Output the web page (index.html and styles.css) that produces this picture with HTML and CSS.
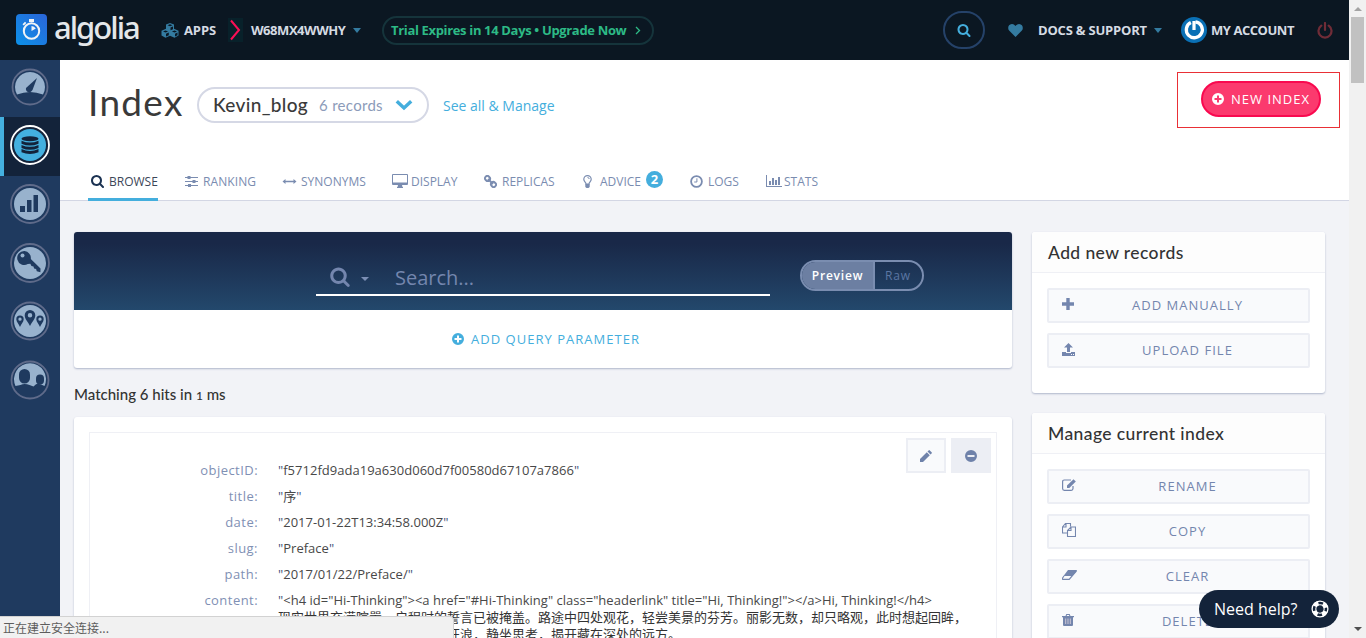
FILE: index.html
```html
<!DOCTYPE html>
<html lang="en">
<head>
<meta charset="utf-8">
<title>Algolia - Index</title>
<link rel="stylesheet" href="styles.css">
</head>
<body>
<svg class="defs" width="0" height="0">
  <symbol id="search" viewBox="0 0 1792 1792"><path fill="currentColor" d="M1216 832q0-185-131.5-316.5t-316.5-131.5-316.5 131.5-131.5 316.5 131.5 316.5 316.500 131.500 316.500-131.500 131.500-316.500zm512 832q0 52-38 90t-90 38q-54 0-90-38l-343-342q-179 124-399 124-143 0-273.500-55.500t-225-150-150-225-55.500-273.500 55.500-273.500 150-225 225-150 273.500-55.500 273.500 55.500 225 150 150 225 55.500 273.500q0 220-124 399l343 343q37 37 37 90z"/></symbol>
  <symbol id="plus-circle" viewBox="0 0 12 12"><path fill="currentColor" fill-rule="evenodd" d="M6 0a6 6 0 1 0 0 12A6 6 0 0 0 6 0zM5 2.500h2V5h2.500v2H7v2.500H5V7H2.500V5H5z"/></symbol>
  <symbol id="pencil" viewBox="0 0 12 12"><path fill="currentColor" d="M0 12V9L6.800 2.200l3 3L3 12zM7.500 1.500L8.600.400q.6-.6 1.200 0l1.800 1.800q.6.600 0 1.200l-1.100 1.100z"/></symbol>
</svg>
<div class="page">
  <header class="topbar">
    <svg class="logo-mark" width="31" height="31" viewBox="0 0 31 31">
      <defs><linearGradient id="lg" x1="1" y1="0" x2="0" y2="1"><stop offset="0" stop-color="#2b65d9"/><stop offset="1" stop-color="#0c91e8"/></linearGradient></defs>
      <rect width="31" height="31" rx="4" fill="url(#lg)"/>
      <circle cx="15.500" cy="17" r="7.700" fill="none" stroke="#f2f4f6" stroke-width="2"/>
      <path d="M13 5h5v3h-5zM6.500 10.300L9 7.800l1.300 1.300-2.500 2.500z" fill="#f2f4f6"/>
      <path d="M15.500 17v-5a5 5 0 0 1 4.300 2.500z" fill="#f2f4f6"/>
    </svg>
    <span class="logo-text">algolia</span>
    <svg class="cubes" width="18" height="15" viewBox="0 0 18 15"><path fill="#347ba0" fill-rule="evenodd" d="M9 0l4 1.600v4.200L17.500 7.800v4.700L13.500 14.800 9 12.800l-4.500 2L.500 12.500V7.800L5 5.800V1.600zM6.500 2.300L9 3.300l2.500-1L9 1.300zM9.500 4.500v2.700l2.500-1V3.400zM2 8.500l2.500 1 2.600-1-2.600-1zM5 10.700v2.700l2.800-1.200V9.500zM10.900 8.500l2.600 1 2.500-1-2.500-1zM14 10.700v2.700l2.500-1.200V9.600z"/></svg>
    <span class="apps">APPS</span>
    <span class="crumb"><svg width="13" height="22" viewBox="0 0 13 22"><path d="M2 1.500l8 9.500-8 9.500" fill="none" stroke="#fb0f56" stroke-width="2"/></svg></span>
    <span class="app-id">W68MX4WWHY</span>
    <i class="caret app-caret"></i>
    <a class="trial"><span>Trial Expires in 14 Days • Upgrade Now</span><svg width="6" height="9" viewBox="0 0 6 9"><path d="M1 1l3.500 3.500L1 8" fill="none" stroke="#2dba86" stroke-width="1.300"/></svg></a>
    <span class="top-search"><svg width="14" height="14"><use href="#search"/></svg></span>
    <svg class="heart" width="15" height="13" viewBox="0 0 15 13"><path fill="#347ba0" d="M7.500 13L1.100 6.600C-.6 4.600 0 .3 3.900 0 6 0 7.500 2 7.500 2S9 0 11.100 0C15 .3 15.600 4.600 13.900 6.600z"/></svg>
    <span class="docs">DOCS &amp; SUPPORT</span>
    <i class="caret docs-caret"></i>
    <svg class="avatar" width="26" height="26" viewBox="0 0 26 26"><circle cx="13" cy="13" r="13" fill="#0a70b5"/><path d="M8.600 6.200A8 8 0 1 0 13 4.700" transform="rotate(10 13 13)" fill="none" stroke="#fff" stroke-width="3.300"/><path d="M13 4v9" stroke="#fff" stroke-width="3.200"/></svg>
    <span class="account">MY ACCOUNT</span>
    <svg class="power" width="16" height="17" viewBox="0 0 16 17"><path d="M4.300 3.700a6.500 6.500 0 1 0 7.400 0M8 1v7" fill="none" stroke="#702c37" stroke-width="2.200" stroke-linecap="round"/></svg>
  </header>

  <div class="body">
    <nav class="sidebar">
      <a class="side first"><svg width="40" height="40" viewBox="0 0 40 40"><circle class="ring" cx="20" cy="20" r="17.500"/><path class="disc" d="M7 27.500A15 15 0 1 1 33 27.500Q20 22.500 7 27.500z"/><path class="ink" d="M27 11l-4.500 12q-2 3-4.500 2t-2-4z"/></svg></a>
      <a class="side active"><svg width="40" height="40" viewBox="0 0 40 40"><circle class="ring" cx="20" cy="20" r="19"/><circle class="disc" cx="20" cy="20" r="16"/><g class="ink"><ellipse cx="20" cy="13.700" rx="8.500" ry="2.500"/><path d="M11.500 15.700q8.500 3.800 17 0v3q-8.500 3.800-17 0zM11.500 19.900q8.500 3.800 17 0v3q-8.500 3.800-17 0zM11.500 24.100q8.500 3.800 17 0v3.200q-8.500 3.200-17 0z"/></g></svg></a>
      <a class="side"><svg width="40" height="40" viewBox="0 0 40 40"><circle class="ring" cx="20" cy="20" r="19"/><circle class="disc" cx="20" cy="20" r="16"/><path class="ink" d="M10 22h5v6h-5zM17 16h4.500v12H17zM23.500 11H28v17h-4.500z"/></svg></a>
      <a class="side"><svg width="40" height="40" viewBox="0 0 40 40"><circle class="ring" cx="20" cy="20" r="19"/><circle class="disc" cx="20" cy="20" r="16"/><path class="ink" d="M14.500 8a7 7 0 1 0 3.300 13l2.500-.3 1.200 2.300 2 .4.600 2 2 .5.700 2.300 3.600 1.100.1-3.700L20.800 16A7 7 0 0 0 14.500 8z"/><circle class="disc" cx="12.500" cy="12.500" r="2"/></svg></a>
      <a class="side"><svg width="40" height="40" viewBox="0 0 40 40"><circle class="ring" cx="20" cy="20" r="18.500"/><circle class="disc" cx="20" cy="20" r="16"/><path class="ink" fill-rule="evenodd" d="M20 9a5.300 5.300 0 0 0-5.300 5.300C14.700 18 18 21 20 25c2-4 5.300-7 5.300-10.700A5.300 5.300 0 0 0 20 9zm0 3a2 2 0 1 1 0 4.500 2 2 0 0 1 0-4.500z"/><path class="ink" fill-rule="evenodd" d="M10 14.500a3.700 3.700 0 0 0-3.700 3.700C6.300 21 9 23 10 26c1-3 3.700-5 3.700-7.800A3.700 3.700 0 0 0 10 14.500zm0 2a1.500 1.500 0 1 1 0 3.300 1.500 1.500 0 0 1 0-3.300zM30 14.500a3.700 3.700 0 0 0-3.700 3.700C26.300 21 29 23 30 26c1-3 3.700-5 3.700-7.800A3.700 3.700 0 0 0 30 14.500zm0 2a1.500 1.500 0 1 1 0 3.300 1.500 1.500 0 0 1 0-3.300z"/></svg></a>
      <a class="side"><svg width="40" height="40" viewBox="0 0 40 40"><circle class="ring" cx="20" cy="20" r="18.500"/><path class="disc" d="M5.500 26A16 16 0 1 1 34.500 26l-4-1.800q-3-1-4.500 0l-2.500 2.300-4-1.500q-5-2-9 0z"/><rect class="ink" x="9" y="9" width="11" height="14.500" rx="5.500"/><rect class="ink" x="26" y="14.500" width="8" height="10" rx="4"/></svg></a>
    </nav>

    <main class="main">
      <section class="head">
        <div class="title-row">
          <h1>Index</h1>
          <a class="picker"><b>Kevin_blog</b><span>6 records</span><svg width="18" height="12" viewBox="0 0 18 12"><path d="M1.800 2.200L9 9l7.200-6.800" fill="none" stroke="#44aedd" stroke-width="3.400"/></svg></a>
          <a class="see-all">See all &amp; Manage</a>
          <div class="highlight"><a class="new-index"><svg width="12" height="12"><use href="#plus-circle"/></svg><span>NEW INDEX</span></a></div>
        </div>
        <nav class="tabs">
          <a class="tab t1 on"><svg width="15" height="14"><use href="#search"/></svg><span>BROWSE</span></a>
          <a class="tab t2"><svg width="13" height="13" viewBox="0 0 13 13"><path fill="currentColor" d="M0 2h13v1H0zM0 6h13v1H0zM0 10h13v1H0zM2.500 1h3v3h-3zM7.500 5h3v3h-3zM3 9h3v3H3z"/></svg><span>RANKING</span></a>
          <a class="tab t3"><svg width="15" height="9" viewBox="0 0 15 9"><path fill="currentColor" d="M.5 4.500L3.500 2v1.700h8V2L14.500 4.500 11.500 7V5.300h-8V7z"/></svg><span>SYNONYMS</span></a>
          <a class="tab t4"><svg width="16" height="14" viewBox="0 0 16 14"><path fill="currentColor" fill-rule="evenodd" d="M1 0h14q1 0 1 1v9q0 1-1 1h-5l.5 2h.5v1H5v-1h.5l.5-2H1q-1 0-1-1V1q0-1 1-1zm0 1v7.500h14V1z"/></svg><span>DISPLAY</span></a>
          <a class="tab t5"><svg width="13" height="13" viewBox="0 0 13 13"><g fill="none" stroke="currentColor" stroke-width="1.900"><rect x="1.200" y="1" width="4.600" height="5" rx="2" transform="rotate(-45 3.500 3.500)"/><rect x="7.200" y="7" width="4.600" height="5" rx="2" transform="rotate(-45 9.500 9.500)"/><path d="M4 4l5 5"/></g></svg><span>REPLICAS</span></a>
          <a class="tab t6"><svg width="9" height="13" viewBox="0 0 9 13"><path d="M3 9C3 7 .8 6.500.8 4.300a3.700 3.700 0 0 1 7.400 0C8.200 6.500 6 7 6 9z" fill="none" stroke="currentColor" stroke-width="1.200"/><path d="M2.300 9h4.400v3L5.500 13h-2l-1.200-1z" fill="currentColor"/><path d="M4.500 2.500q1.700 0 1.700 1.500" fill="none" stroke="currentColor"/></svg><span>ADVICE</span><em>2</em></a>
          <a class="tab t7"><svg width="13" height="13" viewBox="0 0 13 13"><circle cx="6.500" cy="6.500" r="5.400" fill="none" stroke="currentColor" stroke-width="1.800"/><path d="M6.900 3.300v3.700H4.200" fill="none" stroke="currentColor"/></svg><span>LOGS</span></a>
          <a class="tab t8"><svg width="16" height="12" viewBox="0 0 16 12"><path fill="currentColor" d="M0 0h1v11h15v1H0zM3 6h2v4H3zM6 3h2v7H6zM9 5h2v5H9zM12 2h2v8h-2z"/></svg><span>STATS</span></a>
        </nav>
      </section>

      <div class="columns">
        <div class="left">
          <section class="panel query">
            <div class="search-band">
              <div class="field"><svg width="22" height="21"><use href="#search"/></svg><i class="caret"></i><span>Search...</span></div>
              <div class="toggle"><b>Preview</b><span>Raw</span></div>
            </div>
            <a class="add-param"><svg width="12" height="12"><use href="#plus-circle"/></svg><span>ADD QUERY PARAMETER</span></a>
          </section>
          <p class="matching">Matching 6 hits in <small>1</small> ms</p>
          <section class="panel results">
            <div class="record">
              <div class="actions">
                <a><svg width="12" height="12"><use href="#pencil"/></svg></a>
                <a class="dark"><svg width="12" height="12" viewBox="0 0 12 12"><path fill="currentColor" fill-rule="evenodd" d="M6 0a6 6 0 1 0 0 12A6 6 0 0 0 6 0zM2.500 5h7v2h-7z"/></svg></a>
              </div>
              <dl>
                <dt>objectID:</dt><dd><q>"</q>f5712fd9ada19a630d060d7f00580d67107a7866<q>"</q></dd>
                <dt>title:</dt><dd><q>"</q>序<q>"</q></dd>
                <dt>date:</dt><dd><q>"</q>2017-01-22T13:34:58.000Z<q>"</q></dd>
                <dt>slug:</dt><dd><q>"</q>Preface<q>"</q></dd>
                <dt>path:</dt><dd><q>"</q>2017/01/22/Preface/<q>"</q></dd>
                <dt>content:</dt><dd><q>"</q>&lt;h4 id="Hi-Thinking"&gt;&lt;a href="#Hi-Thinking" class="headerlink" title="Hi, Thinking!"&gt;&lt;/a&gt;Hi, Thinking!&lt;/h4&gt;
                  <div class="cjk">现实世界充满喧嚣，启程时的誓言已被掩盖。路途中四处观花，轻尝美景的芬芳。丽影无数，却只略观，此时想起回眸，</div>
                  <div class="cjk second">狂浪，静坐思考，揭开藏在深处的远方。</div></dd>
              </dl>
            </div>
          </section>
        </div>

        <aside class="right">
          <section class="panel side-card add">
            <h2>Add new records</h2>
            <a class="action"><svg width="12" height="12" viewBox="0 0 12 12"><path fill="currentColor" d="M4.300 0h3.400v4.300H12v3.400H7.700V12H4.300V7.700H0V4.300h4.300z"/></svg><span>ADD MANUALLY</span></a>
            <a class="action"><svg width="13" height="13" viewBox="0 0 13 13"><path fill="currentColor" fill-rule="evenodd" d="M6.500 0L11 4.500H8V9H5V4.500H2zM0 9h4v1h5V9h4v4H0zM9 11h1v1H9zM11 11h1v1h-1z"/></svg><span>UPLOAD FILE</span></a>
          </section>
          <section class="panel side-card manage">
            <h2>Manage current index</h2>
            <a class="action"><svg width="14" height="12" viewBox="0 0 14 12"><path d="M11 7v2.500q0 1.800-1.800 1.800H2.300Q.6 11.300.6 9.500V2.800Q.6 1 2.300 1H9" fill="none" stroke="currentColor" stroke-width="1.200"/><path fill="currentColor" d="M5 9V6.600L11.500.2 13.800 2.400 7.300 9z"/></svg><span>RENAME</span></a>
            <a class="action"><svg width="14" height="14" viewBox="0 0 14 14"><path d="M5 10H.5V4l3-3.500h5v3M4 .5V4H.5M13.500 4v9.500h-8v-6L9 4zM9 4v3.500H5.500" fill="none" stroke="currentColor" stroke-width="1.100"/></svg><span>COPY</span></a>
            <a class="action"><svg width="15" height="10" viewBox="0 0 15 10"><path fill="currentColor" d="M6 0h8.500q.7 0 .3 1L10 6H1.500z"/><path d="M2 6L.6 8q-.5 1.400.6 1.400h6L14.300 1" fill="none" stroke="currentColor" stroke-width="1.200"/></svg><span>CLEAR</span></a>
            <a class="action"><svg width="12" height="12" viewBox="0 0 12 12"><path fill="currentColor" d="M0 2h3.500l.8-2h3.400l.8 2H12v1.200h-1V11q0 1-1 1H2q-1 0-1-1V3.200H0zM5 1l-.3 1h2.600L7 1z"/><path d="M3.700 4.500v5.500M6 4.500v5.500M8.300 4.500v5.500" stroke="#d6cdda" stroke-width=".9"/></svg><span>DELETE</span></a>
          </section>
        </aside>
      </div>
    </main>
  </div>

  <div class="scrollbar"><i class="up"></i><i class="thumb"></i><i class="down"></i></div>
  <a class="help"><span>Need help?</span><svg width="18" height="18" viewBox="0 0 18 18"><circle cx="9" cy="9" r="7.900" fill="none" stroke="#fff" stroke-width="1.300"/><circle cx="9" cy="9" r="6" fill="none" stroke="#fff" stroke-width="4.400" stroke-dasharray="4.712 4.712" stroke-dashoffset="-2.356"/><circle cx="9" cy="9" r="4.200" fill="none" stroke="#fff" stroke-width="1.100"/></svg></a>
  <div class="status">正在建立安全连接...</div>
</div>
</body>
</html>
```
FILE: styles.css
```css
* { box-sizing: border-box; }
body { margin: 0; font-family: "Open Sans", "Noto Sans CJK SC", sans-serif; overflow: hidden; }
svg { display: block; flex: none; }
.defs { position: absolute; }
.page { position: relative; width: 1366px; height: 638px; overflow: hidden; background: #f2f3f7; }
span, a, b { white-space: nowrap; }

.topbar { display: flex; align-items: center; width: 1349px; height: 60px; background: #0b1722; color: #d5dbe3; font-size: 13px; font-weight: 700; }
.logo-mark { margin-left: 16px; margin-top: -1px; }
.logo-text { width: 86px; margin: -7px 0 0 7px; font: 500 31px/40px "Noto Sans", sans-serif; letter-spacing: -2px; color: #e4e7ea; }
.cubes { margin-left: 21px; }
.apps { width: 33px; margin-left: 5px; letter-spacing: -.1px; }
.crumb { display: flex; align-items: center; justify-content: center; width: 15px; height: 24px; margin-left: 11px; background: #08212a; }
.app-id { width: 96px; margin-left: 8px; letter-spacing: -.45px; }
.caret { border: 4px solid transparent; border-top: 5px solid #347ba0; border-bottom: 0; }
.app-caret { margin-left: 6px; }
.trial { display: flex; align-items: center; width: 272px; height: 29px; margin-left: 21px; padding: 0 11px 0 7px; border: 2px solid #15343b; border-radius: 15px; color: #2dba86; letter-spacing: -.34px; }
.trial svg { margin-left: auto; }
.top-search { display: flex; align-items: center; justify-content: center; width: 42px; height: 38px; margin-left: 289px; border: 2px solid #254269; border-radius: 19px; color: #44aedd; }
.heart { margin-left: 23px; }
.docs { width: 109px; margin-left: 15px; letter-spacing: -.2px; }
.docs-caret { margin-left: 7px; }
.avatar { margin-left: 19px; }
.account { width: 84px; margin-left: 4px; letter-spacing: -.45px; }
.power { margin-left: 22px; }

.body { display: flex; width: 1349px; height: 578px; }
.sidebar { width: 60px; height: 578px; background: #1f3a5f; }
.side { display: flex; align-items: center; justify-content: center; height: 58.500px; padding-bottom: 2px; }
.side.first { height: 57px; padding: 0 1px 3px 0; }
.side.active { height: 59px; padding: 0 4px 3px 0; border-left: 4px solid #44b0df; background: #13233a; }
.ring { fill: none; stroke: #5f6b8a; stroke-width: 1.800; }
.disc { fill: #98b2cd; }
.ink { fill: #1f3a5f; }
.active .ring { stroke: #fff; }
.active .disc { fill: #44b0df; }
.active .ink { fill: #13233a; }

.main { width: 1289px; }
.head { height: 141px; border-bottom: 1px solid #d3d6e4; background: #fff; }
.title-row { display: flex; height: 102px; padding: 12px 9px 0 28px; }
h1 { width: 97px; margin: 8px 0 0; font: 400 37px/44px Lato, sans-serif; letter-spacing: 1.300px; color: #3a3a3a; }
.picker { display: flex; align-items: center; width: 232px; height: 36px; margin: 15px 0 0 12px; padding: 0 14px 0 14px; border: 2px solid #d5d8e5; border-radius: 18px; }
.picker b { width: 106px; font: 500 19px/30px Lato, sans-serif; letter-spacing: .35px; color: #3a3a3a; }
.picker span { font: 15px/30px Lato, sans-serif; letter-spacing: .3px; color: #8c9bb9; }
.picker svg { margin-left: auto; }
.see-all { margin: 24px 0 0 14px; font-size: 14px; line-height: 20px; color: #44aedd; }
.highlight { width: 163px; height: 56px; margin-left: auto; padding: 8px 0 0 23px; border: 1px solid #e93036; }
.new-index { display: flex; align-items: center; width: 120px; height: 36px; padding-left: 9px; border: 2px solid #f9094f; border-radius: 18px; background: #fb3a6e; color: #fff; font-size: 13px; letter-spacing: 1px; }
.new-index span { margin-left: 7px; }
.tabs { display: flex; height: 39px; padding-left: 28px; color: #7a8cb0; font-size: 12px; }
.tab { display: flex; align-items: center; height: 38px; }
.tab.on { height: 39px; color: #3c4658; border-bottom: 3px solid #44aedd; padding-top: 2px; }
.tab.on svg { color: #1b3252; }
.t1 { width: 70px; margin-right: 27px; padding-left: 2px; } .t1 span { margin-left: 4px; }
.t2 { width: 97px; letter-spacing: .08px; } .t2 span { margin-left: 5px; }
.t3 { width: 110px; } .t3 span { margin-left: 4px; }
.t4 { width: 92px; } .t4 span { margin-left: 3px; }
.t5 { width: 99px; } .t5 span { margin-left: 5px; }
.t6 { width: 107px; } .t6 span { width: 41px; margin-left: 8px; }
.t7 { width: 76px; } .t7 span { margin-left: 5px; }
.t8 span { margin-left: 2px; }
.tab em { width: 17px; height: 17px; margin: -4px 0 0 5px; border-radius: 9px; background: #44aedd; color: #fff; font: 700 13px/17px "Open Sans"; text-align: center; }

.columns { display: flex; gap: 20px; padding: 31px 0 0 14px; }
.left { width: 938px; }
.right { width: 293px; }
.panel { border-radius: 3px; background: #fff; box-shadow: 0 1px 2px #aeb6cb; }
.query { height: 136px; overflow: hidden; }
.search-band { display: flex; height: 78px; padding-left: 242px; background: linear-gradient(#192848 15%, #23486c); }
.field { display: flex; align-items: center; width: 454px; height: 64px; padding: 26px 0 0 13px; border-bottom: 2px solid #fff; color: #7486ae; font-size: 20px; }
.field .caret { margin: 5px 0 0 10px; border-top: 4px solid #7c8fb5; }
.field span { margin: 2px 0 0 26px; }
.toggle { display: flex; width: 124px; height: 31px; margin: 28px 0 0 30px; overflow: hidden; border: 2px solid #7a8db0; border-radius: 16px; font-size: 12px; line-height: 27px; letter-spacing: .9px; color: #5b76a3; text-align: center; }
.toggle b { width: 73px; border-right: 2px solid #7a8db0; background: #6c7fa2; color: #fff; font-weight: 600; letter-spacing: .8px; }
.toggle span { flex: 1; padding-right: 1px; }
.add-param { display: flex; align-items: center; height: 58px; padding-left: 378px; color: #44aedd; font-size: 13px; letter-spacing: 1.020px; }
.add-param span { margin-left: 7px; }
.matching { height: 20px; margin: 16px 0 13px; font: 500 15px/20px Lato, sans-serif; color: #333; }
.matching small { font-size: 12px; }
.results { height: 260px; padding: 15px; }
.record { position: relative; height: 245px; border: 1px solid #eff0f5; }
.actions { position: absolute; top: 5px; right: 5px; display: flex; gap: 5px; }
.actions a { display: flex; align-items: center; justify-content: center; width: 40px; height: 35px; border: 2px solid #eceef4; background: #f9fafc; color: #6f82aa; }
.actions .dark { background: #eceef4; }
dl { display: grid; grid-template-columns: 168px 1fr; grid-auto-rows: 26px; column-gap: 20px; margin: 24px 0 0; font-size: 13px; line-height: 26px; color: #484848; }
dt { text-align: right; color: #7f90b4; letter-spacing: .45px; }
dd { margin: 0; white-space: nowrap; letter-spacing: .02px; }
q { quotes: none; color: #3f5279; }
q::before, q::after { content: none; }
.cjk { height: 17px; margin-top: -5px; font: 13px/17px "Noto Sans CJK SC", sans-serif; letter-spacing: 0; color: #333; }
.second { margin-top: 0; padding-left: 169px; }

.side-card h2 { height: 41px; margin: 0 0 15px; padding-left: 16px; border-bottom: 1px solid #eff0f5; border-radius: 3px 3px 0 0; background: #fdfdfd; font: 500 17.500px/42px Lato, sans-serif; letter-spacing: .4px; color: #333; }
.add { height: 161px; margin-bottom: 20px; }
.manage { height: 260px; }
.action { position: relative; display: flex; align-items: center; width: 263px; height: 35px; margin: 0 0 10px 15px; padding: 0 0 3px 13px; border: 2px solid #eceef4; border-radius: 2px; background: #f9fafc; color: #7486ae; font-size: 13px; letter-spacing: 1.020px; }
.action span { position: absolute; left: 18px; right: 0; top: 5px; line-height: 20px; text-align: center; }

.scrollbar { position: absolute; top: 0; right: 0; width: 17px; height: 638px; background: #f1f1f1; }
.scrollbar i { position: absolute; }
.thumb { left: 2px; top: 17px; width: 13px; height: 66px; background: #c1c1c1; }
.up { left: 5px; top: 7px; border: 4px solid transparent; border-top: 0; border-bottom-color: #a3a3a3; }
.down { left: 5px; top: 627px; border: 4px solid transparent; border-bottom: 0; border-top-color: #505050; }
.help { position: absolute; left: 1199px; top: 590px; display: flex; align-items: center; justify-content: space-between; width: 140px; height: 38px; padding: 0 10px 0 15px; border-radius: 19px; background: #13233a; color: #fff; font-size: 16px; }
.status { position: absolute; left: -1px; top: 616px; width: 455px; height: 23px; padding-left: 3px; border: 1px solid #d2d2d2; border-radius: 0 4px 0 0; background: #f1f1f1; color: #5d5d5d; font: 12px/21px "Noto Sans CJK SC", sans-serif; }
```
